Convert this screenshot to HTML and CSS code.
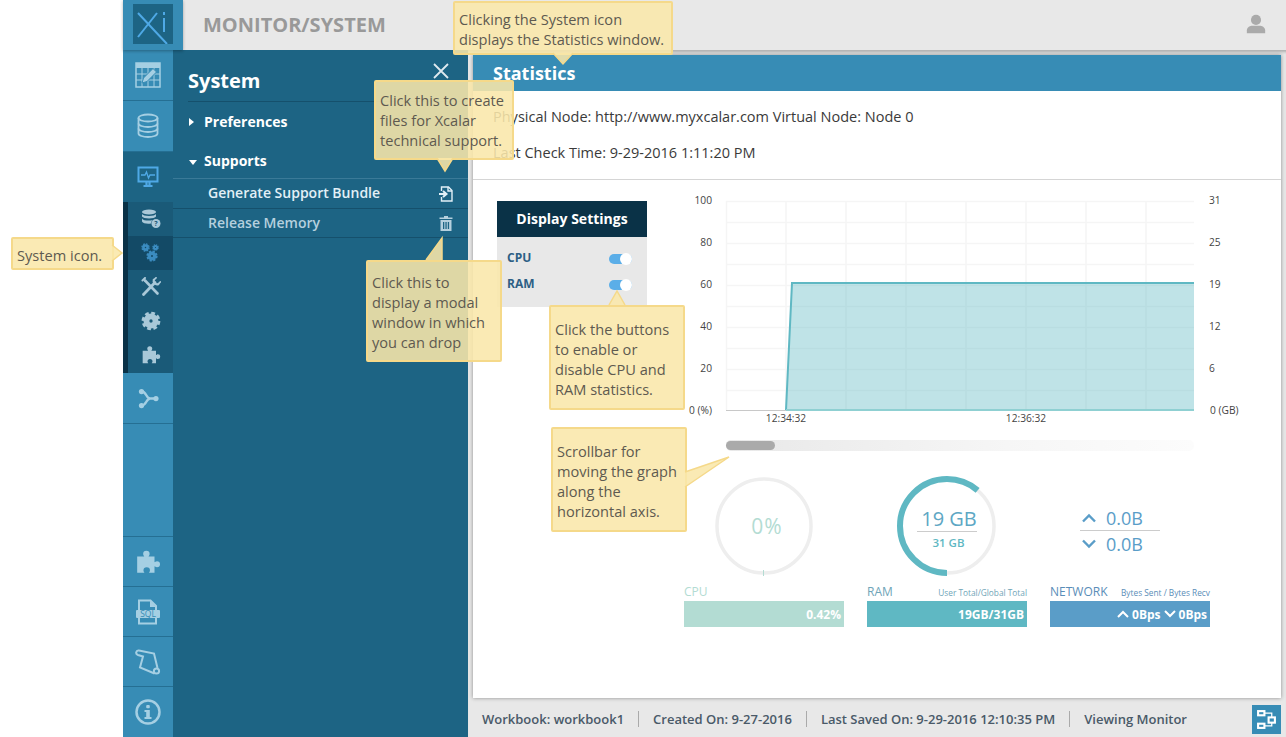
FILE: index.html
```html
<!DOCTYPE html>
<html lang="en">
<head>
    <meta charset="UTF-8">
    <meta name="viewport" content="width=device-width, initial-scale=1.0">
    <title>Monitor/System</title>
    <link rel="stylesheet" href="styles.css">
</head>
<body>
    <svg class="defs" width="0" height="0">
        <symbol id="i-puzzle" viewBox="0 0 24 24">
            <path fill="currentColor" d="M2 7h6.500c.6 0-1-1-1-2.500a3 3 0 0 1 6 0c0 1.500-1.500 2.500-1 2.500H18v5c0 .6 1-.8 2.300-.8a2.800 2.800 0 0 1 0 5.600c-1.300 0-2.300-1.400-2.300-.8V22h-5c-.6 0 .8-1 .8-2.200a3 3 0 0 0-6 0c0 1.200 1.400 2.200.8 2.200H2z"/>
        </symbol>
        <symbol id="i-cog" viewBox="0 0 24 24">
            <circle cx="12" cy="12" r="5.500" fill="none" stroke="currentColor" stroke-width="7"/>
            <circle cx="12" cy="12" r="9.500" fill="none" stroke="currentColor" stroke-width="3.500" stroke-dasharray="4.460 3"/>
        </symbol>
    </svg>

    <div class="app">
        <div class="logo">
            <svg class="logo-mark" viewBox="0 0 40 40">
                <rect width="40" height="40" fill="#1d6484"/>
                <g stroke="#4fa9e6" stroke-width="2" fill="none">
                    <line x1="5" y1="9" x2="34" y2="40"/>
                    <line x1="24" y1="9" x2="5" y2="33"/>
                    <line x1="31" y1="14" x2="31" y2="28"/>
                    <line x1="31" y1="8" x2="31" y2="11"/>
                </g>
            </svg>
        </div>
        <header class="topbar">
            <h1 class="page-title">MONITOR/SYSTEM</h1>
            <svg class="user-icon" viewBox="0 0 24 24">
                <circle cx="12" cy="7.500" r="5.500" fill="currentColor"/>
                <path fill="currentColor" d="M2 22v-3c0-3.500 4-5 6-5h8c2 0 6 1.500 6 5v3z"/>
            </svg>
        </header>

        <div class="workspace">
            <nav class="nav">
                <div class="nav-item">
                    <svg class="icon-lg" viewBox="0 0 26 26">
                        <rect x="1" y="1" width="24" height="24" fill="none" stroke="currentColor" stroke-width="1.500"/>
                        <rect x="1" y="1" width="24" height="5" fill="currentColor"/>
                        <path d="M1 12h24M1 18h24M7 6v19M13 6v19M19 6v19" stroke="currentColor" fill="none"/>
                        <path d="M7 21l1.500-5L18 6.500l3.500 3.500L12 19.500z" fill="currentColor" stroke="#378cb5"/>
                    </svg>
                </div>
                <div class="nav-item">
                    <svg class="icon-lg" viewBox="0 0 26 26" fill="none" stroke="currentColor" stroke-width="1.800">
                        <ellipse cx="13" cy="5" rx="9.500" ry="3.500"/>
                        <path d="M3.500 5v15.500c0 2 4.500 3.500 9.500 3.500s9.500-1.500 9.500-3.500V5"/>
                        <path d="M3.500 10.500c0 2 4.500 3.500 9.500 3.500s9.500-1.500 9.500-3.500M3.500 15.500c0 2 4.500 3.500 9.500 3.500s9.500-1.500 9.500-3.500"/>
                    </svg>
                </div>
                <div class="nav-item nav-item-active">
                    <svg class="icon-md" viewBox="0 0 22 22" fill="none" stroke="currentColor" stroke-width="2">
                        <rect x="1.500" y="1.500" width="19" height="14"/>
                        <path d="M4 9h4l1.500-3 2 6 1.500-3h5" stroke-width="1.300"/>
                        <path d="M6.500 20h9M9.500 16v3M12.500 16v3" stroke-width="2.200"/>
                    </svg>
                </div>
                <div class="nav-sub">
                    <div class="sub-item">
                        <svg class="icon-sm" viewBox="0 0 20 20">
                            <g fill="currentColor">
                                <ellipse cx="8" cy="3" rx="7" ry="2.500"/>
                                <path d="M1 5c1 2.500 13 2.500 14 0v2.500c-1 2.500-13 2.500-14 0zM1 9.500c1 2.500 9 2.500 10 1.500l-1 3.500c-4 .5-8 0-9-2z"/>
                                <circle cx="15" cy="14.500" r="4.500"/>
                            </g>
                            <text x="15" y="17.300" class="icon-q">?</text>
                        </svg>
                    </div>
                    <div class="sub-item sub-item-active">
                        <svg class="icon-sm" viewBox="0 0 20 20">
                            <use href="#i-cog" x="0" y="0" width="9" height="9"/>
                            <use href="#i-cog" x="11" y="1" width="7" height="7"/>
                            <use href="#i-cog" x="5" y="7" width="12" height="12"/>
                        </svg>
                    </div>
                    <div class="sub-item">
                        <svg class="icon-sm" viewBox="0 0 20 20" fill="none" stroke="currentColor" stroke-linecap="round">
                            <path d="M4 3.500L16.500 16.500" stroke-width="2.600"/>
                            <path d="M2.500 17.500L14 5.500" stroke-width="2.800"/>
                            <path d="M1.500 3.500L4 1" stroke-width="2"/>
                            <path d="M12.800 2.800a3.500 3.500 0 0 0 4.400 4.400" stroke-width="2.200"/>
                            <path d="M12.800 2.800L15 .8M17.200 7.200L19.200 5" stroke-width="1.800"/>
                        </svg>
                    </div>
                    <div class="sub-item">
                        <svg class="icon-sm" viewBox="0 0 24 24"><use href="#i-cog"/></svg>
                    </div>
                    <div class="sub-item">
                        <svg class="icon-sm" viewBox="0 0 24 24"><use href="#i-puzzle"/></svg>
                    </div>
                </div>
                <div class="nav-item nav-item-ruled">
                    <svg class="flow-icon" viewBox="0 0 24 24" fill="none" stroke="currentColor" stroke-width="2.800">
                        <path d="M4 4c6 0 5 8 10 8h7M4 20c6 0 5-8 10-8"/>
                        <circle cx="4" cy="4" r="3" fill="currentColor" stroke="none"/>
                        <circle cx="4" cy="20" r="3" fill="currentColor" stroke="none"/>
                        <circle cx="20.500" cy="12" r="3" fill="currentColor" stroke="none"/>
                    </svg>
                </div>
                <div class="nav-spacer"></div>
                <div class="nav-item nav-foot">
                    <svg class="icon-lg" viewBox="0 0 24 24"><use href="#i-puzzle"/></svg>
                </div>
                <div class="nav-item nav-foot">
                    <svg class="icon-lg" viewBox="0 0 26 26">
                        <path d="M4 11V1.500h11.500L21 7v4M4 19v5.500h17V19" fill="none" stroke="currentColor" stroke-width="2"/>
                        <path d="M15 1.500V8h6" fill="currentColor"/>
                        <rect x="1" y="11" width="24" height="8" rx="1" fill="currentColor"/>
                        <text x="13" y="18" class="icon-sql">SQL</text>
                    </svg>
                </div>
                <div class="nav-item nav-foot">
                    <svg class="icon-lg" viewBox="0 0 26 26" fill="none" stroke="currentColor" stroke-width="2">
                        <path d="M4 1.500L19 4.500L22.500 19"/>
                        <path d="M4 1.500C1 1 0 5 3 6L8 7.500L5 18.500L19.500 24.500"/>
                        <circle cx="21.500" cy="22" r="2.600"/>
                    </svg>
                </div>
                <div class="nav-item nav-item-last">
                    <svg class="icon-lg" viewBox="0 0 26 26">
                        <circle cx="13" cy="13" r="11.500" fill="none" stroke="currentColor" stroke-width="2.500"/>
                        <rect x="11.200" y="6" width="3.600" height="3.200" rx="1" fill="currentColor"/>
                        <path d="M9.500 11h5.300v7h1.700v2h-7v-2h1.700v-5H9.500z" fill="currentColor"/>
                    </svg>
                </div>
            </nav>

            <aside class="panel">
                <div class="panel-head">
                    <h2 class="panel-title">System</h2>
                    <svg class="panel-close" viewBox="0 0 16 16" stroke="currentColor" stroke-width="1.800"><path d="M1 1l14 14M15 1L1 15"/></svg>
                </div>
                <div class="panel-group"><span class="caret caret-right"></span>Preferences</div>
                <div class="panel-group panel-group-open"><span class="caret caret-down"></span>Supports</div>
                <div class="panel-row">
                    <span class="row-label">Generate Support Bundle</span>
                    <svg class="row-icon" viewBox="0 0 16 16" fill="none" stroke="currentColor" stroke-width="1.400">
                        <path d="M3.500 5V1h7l3.500 3.500V15H3.500v-4"/>
                        <path d="M10 1v4h4"/>
                        <path d="M1 8h6M5 5l3.500 3L5 11" stroke-width="2"/>
                    </svg>
                </div>
                <div class="panel-row panel-row-dim">
                    <span class="row-label">Release Memory</span>
                    <svg class="row-icon" viewBox="0 0 16 16">
                        <path fill="currentColor" d="M1.500 2.500h4.500V1h4v1.500h4.500V4h-13zM2.500 5h11v11h-11zM5 7v7h1.300V7zM7.400 7v7h1.300V7zM9.800 7v7h1.300V7z" fill-rule="evenodd"/>
                    </svg>
                </div>
            </aside>

            <main class="main">
                <section class="card">
                    <div class="card-head">Statistics</div>
                    <div class="node-info">
                        <p>Physical Node: http://www.myxcalar.com Virtual Node: Node 0</p>
                        <p>Last Check Time: 9-29-2016 1:11:20 PM</p>
                    </div>
                    <div class="card-body">
                        <div class="settings">
                            <div class="settings-head">Display Settings</div>
                            <div class="settings-list">
                                <div class="setting"><span>CPU</span><span class="toggle"></span></div>
                                <div class="setting"><span>RAM</span><span class="toggle"></span></div>
                            </div>
                        </div>
                        <div class="graph">
                            <svg class="chart" viewBox="680 190 570 250">
                                <g class="grid">
                                    <path d="M726 201.500h468M726 222.500h468M726 243.500h468M726 264.500h468M726 285.500h468M726 306.500h468M726 327.500h468M726 348.500h468M726 369.500h468M726 390.500h468"/>
                                    <path d="M726.500 201v209M786 201v209M846 201v209M906 201v209M966 201v209M1026 201v209M1086 201v209M1146 201v209"/>
                                </g>
                                <path class="area" d="M786 410L792 283H1194V410z"/>
                                <path class="area-line" d="M786 410L792 283H1194"/>
                                <path class="axis" d="M726 410.500H1194"/>
                                <path class="area-base" d="M786 410H1194"/>
                                <g class="tick-left">
                                    <text x="712" y="204">100</text>
                                    <text x="712" y="246">80</text>
                                    <text x="712" y="288">60</text>
                                    <text x="712" y="330">40</text>
                                    <text x="712" y="372">20</text>
                                    <text x="712" y="414">0 (%)</text>
                                </g>
                                <g class="tick-right">
                                    <text x="1209" y="204">31</text>
                                    <text x="1209" y="246">25</text>
                                    <text x="1209" y="288">19</text>
                                    <text x="1209" y="330">12</text>
                                    <text x="1209" y="372">6</text>
                                    <text x="1210" y="414">0 (GB)</text>
                                </g>
                                <g class="tick-bottom">
                                    <text x="786" y="422">12:34:32</text>
                                    <text x="1026" y="422">12:36:32</text>
                                </g>
                            </svg>
                            <div class="scrollbar"><div class="scroll-thumb"></div></div>
                            <div class="meters">
                                <div class="meter">
                                    <div class="gauge">
                                        <svg viewBox="0 0 100 100">
                                            <circle class="ring" cx="50" cy="50" r="47"/>
                                            <path class="ring-tick" d="M49.500 94v6"/>
                                        </svg>
                                        <div class="gauge-text gauge-cpu">0%</div>
                                    </div>
                                    <div class="meter-label label-cpu"><span>CPU</span></div>
                                    <div class="meter-bar bar-cpu">0.42%</div>
                                </div>
                                <div class="meter">
                                    <div class="gauge">
                                        <svg viewBox="0 0 100 100">
                                            <circle class="ring" cx="50" cy="50" r="47"/>
                                            <circle class="ring-value" cx="50" cy="50" r="47" pathLength="100" stroke-dasharray="61.300 100" transform="rotate(90 50 50)"/>
                                        </svg>
                                        <div class="gauge-text gauge-ram">
                                            <div class="gauge-big">19 GB</div>
                                            <div class="gauge-small">31 GB</div>
                                        </div>
                                    </div>
                                    <div class="meter-label label-ram"><span>RAM</span><small>User Total/Global Total</small></div>
                                    <div class="meter-bar bar-ram">19GB/31GB</div>
                                </div>
                                <div class="meter">
                                    <div class="gauge">
                                        <div class="net-text">
                                            <div class="net-line net-up"><svg viewBox="0 0 16 10"><path d="M2 8.500l6-6 6 6"/></svg>0.0B</div>
                                            <div class="net-line"><svg viewBox="0 0 16 10"><path d="M2 1.500l6 6 6-6"/></svg>0.0B</div>
                                        </div>
                                    </div>
                                    <div class="meter-label label-net"><span>NETWORK</span><small>Bytes Sent / Bytes Recv</small></div>
                                    <div class="meter-bar bar-net">
                                        <svg viewBox="0 0 12 8"><path d="M1 7l5-5 5 5"/></svg>0Bps
                                        <svg viewBox="0 0 12 8"><path d="M1 1l5 5 5-5"/></svg>0Bps
                                    </div>
                                </div>
                            </div>
                        </div>
                    </div>
                </section>
                <footer class="status">
                    <span class="status-item">Workbook: workbook1</span>
                    <span class="status-item">Created On: 9-27-2016</span>
                    <span class="status-item">Last Saved On: 9-29-2016 12:10:35 PM</span>
                    <span class="status-item">Viewing Monitor</span>
                    <div class="status-btn">
                        <svg viewBox="0 0 20 20" fill="none" stroke="#fff" stroke-width="2">
                            <rect x="2" y="2" width="6" height="4"/>
                            <rect x="12" y="8" width="6" height="5"/>
                            <rect x="2" y="14" width="6" height="4"/>
                            <path d="M8 4h7v4M8 16h7v-3" stroke-width="1.200"/>
                        </svg>
                    </div>
                </footer>
            </main>
        </div>
    </div>

    <div class="tip tip-stats">Clicking the System icon displays the Statistics window.
        <svg class="arrow" viewBox="0 0 20 12"><path class="arrow-fill" d="M0 0L10 11 20 0z"/><path class="arrow-edge" d="M0 0L10 11 20 0"/></svg>
    </div>
    <div class="tip tip-bundle">Click this to create files for Xcalar technical support.
        <svg class="arrow" viewBox="0 0 16 13"><path class="arrow-fill" d="M0 0L8 13 16 0z"/><path class="arrow-edge" d="M0 0L8 13 16 0"/></svg>
    </div>
    <div class="tip tip-system">System icon.
        <svg class="arrow" viewBox="0 0 10 16"><path class="arrow-fill" d="M0 0L10 8 0 16z"/><path class="arrow-edge" d="M0 0L10 8 0 16"/></svg>
    </div>
    <div class="tip tip-memory">Click this to display a modal window in which you can drop
        <svg class="arrow" viewBox="0 0 16 22"><path class="arrow-fill" d="M0 22L16 0V22z"/><path class="arrow-edge" d="M0 22L16 0V22"/></svg>
    </div>
    <div class="tip tip-toggle">Click the buttons to enable or disable CPU and RAM statistics.
        <svg class="arrow" viewBox="0 0 16 14"><path class="arrow-fill" d="M0 14L8 0 16 14z"/><path class="arrow-edge" d="M0 14L8 0 16 14"/></svg>
    </div>
    <div class="tip tip-scroll">Scrollbar for moving the graph along the horizontal axis.
        <svg class="arrow" viewBox="0 0 44 30"><path class="arrow-fill" d="M0 15L44 0 0 30z"/><path class="arrow-edge" d="M0 15L44 0 0 30"/></svg>
    </div>
</body>
</html>
```

FILE: styles.css
```css
* {
    box-sizing: border-box;
}

html, body {
    height: 100%;
}

body {
    margin: 0;
    background-color: #fff;
    font-family: "Open Sans", sans-serif;
    overflow: hidden;
}

.defs {
    position: absolute;
}

.app {
    margin-left: 123px;
    height: 737px;
    display: grid;
    grid-template-columns: 60px 1fr;
    grid-template-rows: 50px 1fr;
}

.logo {
    background-color: #378cb5;
    padding: 4px 10px 6px;
    z-index: 2;
    box-shadow: 0 1px 3px rgba(0, 0, 0, 0.3);
}

.logo-mark {
    display: block;
    width: 40px;
    height: 40px;
}

.topbar {
    background-color: #e8e8e8;
    display: flex;
    align-items: center;
    justify-content: space-between;
    padding: 0 19px 2px 20px;
}

.page-title {
    margin: 0;
    font-size: 20px;
    font-weight: 700;
    color: #999;
}

.user-icon {
    width: 22px;
    height: 22px;
    color: #aaa;
}

.workspace {
    grid-column: 1 / span 2;
    display: flex;
    min-height: 0;
}

/* left icon column */
.nav {
    width: 50px;
    display: flex;
    flex-direction: column;
    background-color: #378cb5;
    color: #a5cfe3;
}

.nav-item {
    height: 51px;
    flex: none;
    display: flex;
    align-items: center;
    justify-content: center;
    border-bottom: 1px solid #256f93;
}

.nav-foot {
    height: 50px;
}

.nav-item-active {
    background-color: #1d6484;
    color: #4fa9e6;
    border-bottom: none;
    height: 50px;
}

.nav-item-last {
    border-bottom: none;
    height: 50px;
}

.nav-spacer {
    height: 113px;
    flex: none;
    border-bottom: 1px solid #256f93;
}

.nav-sub {
    flex: none;
    height: 171px;
    background-color: #1a5a78;
    border-left: 5px solid #0a3247;
    color: #a9c8d8;
}

.sub-item {
    height: 34px;
    display: flex;
    align-items: center;
    justify-content: center;
}

.sub-item-active {
    background-color: #134a66;
    color: #3b8cc0;
}

.icon-lg {
    width: 26px;
    height: 26px;
}

.icon-md {
    width: 22px;
    height: 22px;
}

.icon-sm {
    width: 20px;
    height: 20px;
}

.flow-icon {
    width: 21px;
    height: 21px;
}

.icon-q {
    font-size: 7px;
    font-weight: 700;
    fill: #1a5a78;
    text-anchor: middle;
}

.icon-sql {
    font-size: 8.5px;
    font-weight: 400;
    fill: #378cb5;
    text-anchor: middle;
}

/* system panel */
.panel {
    width: 295px;
    background-color: #1d6484;
    color: #fff;
    flex: none;
}

.panel-head {
    height: 52px;
    margin-left: 15px;
    border-bottom: 1px solid #15506c;
    display: flex;
    align-items: center;
    justify-content: space-between;
    padding: 9px 19px 0 0;
}

.panel-title {
    margin: 0;
    font-size: 20px;
    font-weight: 700;
}

.panel-close {
    width: 16px;
    height: 16px;
    color: #dfe9ef;
    margin-top: -18px;
}

.panel-group {
    position: relative;
    height: 49px;
    padding: 10px 0 0 31px;
    font-size: 14px;
    font-weight: 700;
    line-height: 20px;
}

.panel-group-open {
    height: 28px;
    padding-top: 0;
    border-bottom: 1px solid #3a7a98;
}

.caret {
    position: absolute;
    left: 16px;
}

.caret-right {
    top: 16px;
    border-left: 5px solid #fff;
    border-top: 4px solid transparent;
    border-bottom: 4px solid transparent;
}

.caret-down {
    top: 9px;
    border-top: 5px solid #fff;
    border-left: 4px solid transparent;
    border-right: 4px solid transparent;
}

.panel-row {
    height: 30px;
    padding: 0 14px 0 35px;
    display: flex;
    align-items: center;
    justify-content: space-between;
    font-size: 14px;
    font-weight: 600;
    color: #e2f0f7;
    border-bottom: 1px solid #15506c;
}

.row-label {
    margin-bottom: 2px;
}

.panel-row-dim {
    height: 29px;
    color: #b5d0de;
}

.row-icon {
    width: 16px;
    height: 16px;
}

/* main window */
.main {
    flex: 1;
    min-width: 0;
    background-color: #e8e8e8;
    display: flex;
    flex-direction: column;
    padding: 5px 5px 0;
    box-shadow: inset 0 4px 3px -2px rgba(0, 0, 0, 0.25);
}

.card {
    height: 643px;
    flex: none;
    background-color: #fff;
    box-shadow: 0 0 4px rgba(0, 0, 0, 0.4);
}

.card-head {
    height: 36px;
    background-color: #378cb5;
    color: #fff;
    font-size: 18px;
    font-weight: 700;
    line-height: 37px;
    padding-left: 20px;
}

.node-info {
    height: 89px;
    padding: 8px 20px 0;
    border-bottom: 1px solid #d5d5d5;
    font-size: 14.5px;
    line-height: 36px;
    color: #3a3a3a;
}

.node-info p {
    margin: 0;
}

.card-body {
    display: flex;
    padding: 10px 0 0 24px;
}

.settings {
    width: 150px;
    height: 106px;
    margin-top: 11px;
    background-color: #e8e8e8;
}

.settings-head {
    height: 36px;
    background-color: #0a3247;
    color: #fff;
    font-size: 14px;
    font-weight: 700;
    line-height: 36px;
    text-align: center;
}

.settings-list {
    padding: 7px 15px 0 10px;
}

.setting {
    height: 26px;
    display: flex;
    align-items: center;
    justify-content: space-between;
    font-size: 12px;
    font-weight: 700;
    color: #2d5f85;
}

.toggle {
    position: relative;
    width: 23px;
    height: 10px;
    margin-top: 4px;
    border-radius: 5px;
    background-color: #5baee8;
}

.toggle::after {
    content: "";
    position: absolute;
    right: 0;
    top: -1px;
    width: 12px;
    height: 12px;
    border-radius: 50%;
    background-color: #fff;
}

.graph {
    margin-left: 33px;
    width: 570px;
}

.chart {
    display: block;
    width: 570px;
    height: 250px;
    font-family: "Open Sans", sans-serif;
    font-size: 10.2px;
    fill: #444;
}

.grid path {
    fill: none;
    stroke: #f5f5f5;
    stroke-width: 1.500;
}

.area {
    fill: #5fb8c3;
    fill-opacity: 0.4;
    stroke: none;
}

.area-line {
    fill: none;
    stroke: #5fb8c3;
    stroke-width: 2;
}

.area-base {
    stroke: #8fd0d2;
    stroke-width: 2;
}

.axis {
    stroke: #c8c8c8;
    stroke-width: 1;
}

.tick-left text {
    text-anchor: end;
}

.tick-bottom text {
    text-anchor: middle;
}

.scrollbar {
    margin-left: 46px;
    width: 468px;
    height: 11px;
    padding-top: 1px;
    border-radius: 5px;
    background: linear-gradient(to right, #e8e8e8, #f6f6f6 60%, #fcfcfc);
}

.scroll-thumb {
    width: 49px;
    height: 9px;
    border-radius: 5px;
    background-color: #aaa;
}

.meters {
    display: flex;
    gap: 23px;
    margin: 25px 0 0 4px;
}

.meter {
    width: 160px;
}

.gauge {
    position: relative;
    width: 100px;
    height: 100px;
    margin: 0 auto;
}

.gauge svg {
    display: block;
    width: 100px;
    height: 100px;
}

.ring {
    fill: none;
    stroke: #eee;
    stroke-width: 3.500;
}

.ring-tick {
    stroke: #b3dcd3;
    stroke-width: 1;
}

.ring-value {
    fill: none;
    stroke: #5fb8c3;
    stroke-width: 6;
}

.gauge-text {
    position: absolute;
    left: 0;
    right: 0;
    top: 0;
    bottom: 0;
    display: flex;
    flex-direction: column;
    align-items: center;
}

.gauge-cpu {
    justify-content: center;
    padding-left: 6px;
    font-size: 21px;
    letter-spacing: 1px;
    color: #b3dcd3;
}

.gauge-ram {
    padding-top: 30px;
}

.gauge-big {
    width: 60px;
    padding-left: 4px;
    font-size: 20px;
    line-height: 25px;
    color: #5da7c4;
    text-align: center;
    border-bottom: 1px solid #ccc;
    white-space: nowrap;
}

.gauge-small {
    padding-left: 3px;
    font-size: 11.5px;
    line-height: 22px;
    font-weight: 600;
    color: #5fb8c3;
}

.net-text {
    position: absolute;
    left: 0;
    top: 29px;
    width: 80px;
    color: #5a9dc8;
    font-size: 18px;
}

.net-line {
    height: 26px;
    line-height: 26px;
    display: flex;
    align-items: center;
    gap: 9px;
    padding-left: 1px;
}

.net-up {
    border-bottom: 1px solid #ccc;
}

.gauge .net-line svg {
    width: 16px;
    height: 10px;
    fill: none;
    stroke: #5a9dc8;
    stroke-width: 2.400;
}

.meter-label {
    display: flex;
    align-items: baseline;
    justify-content: space-between;
    height: 25px;
    padding-top: 7px;
    font-size: 12px;
    line-height: 18px;
}

.meter-label small {
    font-size: 8.300px;
}

.label-cpu {
    color: #b3dcd3;
}

.label-ram {
    color: #6fa5b8;
}

.label-ram small {
    color: #6fa5b8;
}

.label-net {
    color: #5a8db8;
}

.meter-bar {
    height: 26px;
    display: flex;
    align-items: center;
    justify-content: flex-end;
    gap: 3px;
    padding-right: 3px;
    color: #fff;
    font-size: 12px;
    font-weight: 700;
}

.meter-bar svg {
    width: 12px;
    height: 8px;
    fill: none;
    stroke: #fff;
    stroke-width: 2;
}

.bar-cpu {
    background-color: #b3dcd3;
}

.bar-ram {
    background-color: #5fb8c3;
}

.bar-net {
    background-color: #5a9dc8;
}

/* status bar */
.status {
    flex: 1;
    display: flex;
    align-items: center;
    padding: 3px 0 0 9px;
    font-size: 13px;
    font-weight: 600;
    color: #4a5a68;
}

.status-item {
    padding-right: 14px;
    margin-right: 14px;
    border-right: 1px solid #aaa;
    line-height: 16px;
}

.status-item:nth-child(4) {
    border-right: none;
}

.status-btn {
    margin-left: auto;
    width: 29px;
    height: 29px;
    padding: 4px;
    background-color: #378cb5;
}

.status-btn svg {
    display: block;
    width: 21px;
    height: 21px;
}

/* annotation callouts */
.tip {
    position: absolute;
    padding: 0 4px;
    background-color: rgba(249, 231, 170, 0.88);
    border: 2px solid #f5d98a;
    border-radius: 2px;
    font-size: 14.6px;
    line-height: 20px;
    color: #5e5a50;
    z-index: 5;
}

.arrow {
    position: absolute;
    overflow: visible;
}

.arrow-fill {
    fill: rgba(249, 231, 170, 0.88);
}

.arrow-edge {
    fill: none;
    stroke: #f5d98a;
    stroke-width: 1.500;
}

.tip-stats {
    left: 453px;
    top: 1px;
    width: 220px;
    height: 54px;
    padding-top: 6px;
}

.tip-stats .arrow {
    left: 98px;
    top: 100%;
    width: 20px;
    height: 12px;
}

.tip-bundle {
    left: 374px;
    top: 80px;
    width: 140px;
    height: 80px;
    padding-top: 8px;
}

.tip-bundle .arrow {
    left: 61px;
    top: 100%;
    width: 16px;
    height: 13px;
}

.tip-system {
    left: 11px;
    top: 237px;
    width: 103px;
    height: 33px;
    padding-top: 6px;
}

.tip-system .arrow {
    left: 100%;
    top: 6px;
    width: 10px;
    height: 16px;
}

.tip-memory {
    left: 366px;
    top: 260px;
    width: 136px;
    height: 102px;
    padding-top: 10px;
}

.tip-memory .arrow {
    left: 58px;
    top: -24px;
    width: 16px;
    height: 22px;
}

.tip-toggle {
    left: 549px;
    top: 305px;
    width: 136px;
    height: 105px;
    padding-top: 12px;
}

.tip-toggle .arrow {
    left: 58px;
    top: -16px;
    width: 16px;
    height: 14px;
}

.tip-scroll {
    left: 551px;
    top: 427px;
    width: 136px;
    height: 105px;
    padding-top: 12px;
}

.tip-scroll .arrow {
    left: 100%;
    top: 28px;
    width: 44px;
    height: 30px;
}
```
